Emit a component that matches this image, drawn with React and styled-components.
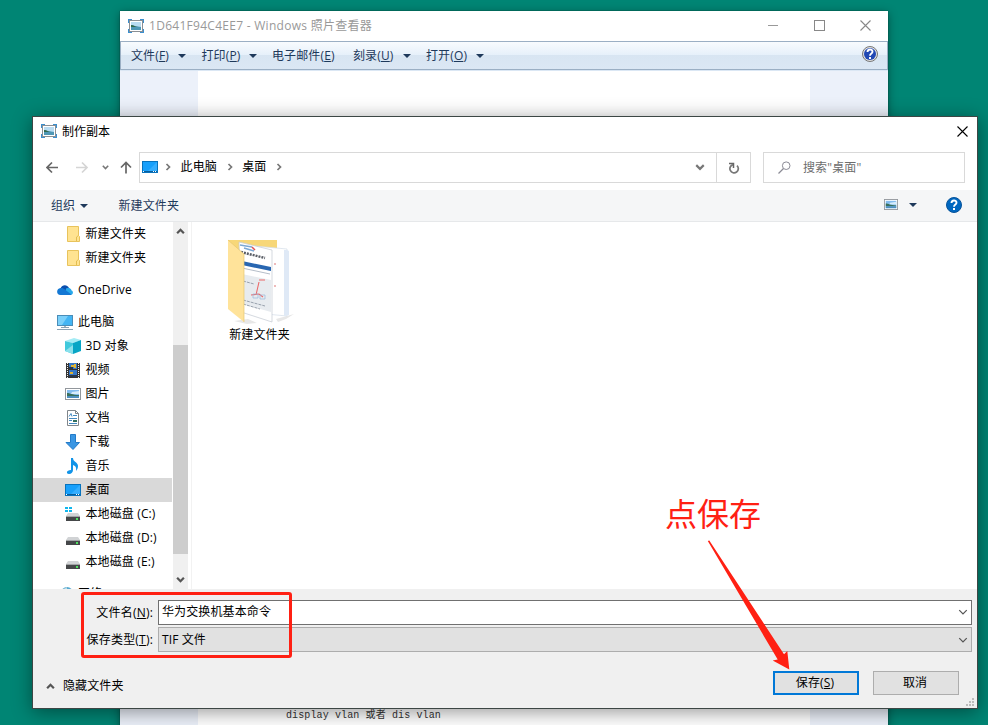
import React from 'react'
import styled, { createGlobalStyle } from 'styled-components'

const GlobalStyle = createGlobalStyle`
* {
  box-sizing: border-box;
}
body {
  margin: 0;
  overflow: hidden;
  font-family: "Open Sans", "Noto Sans CJK SC", sans-serif;
  font-size: 12px;
  line-height: 16px;
  letter-spacing: 0.12px;
  color: #000;
}
svg {
  display: block;
  flex: none;
}
`

const Desktop = styled.div`
position: relative;
width: 988px;
height: 725px;
overflow: hidden;
background: #008574;
`

const Viewer = styled.section`
position: absolute;
left: 120px;
top: 11px;
width: 768px;
height: 730px;
display: flex;
flex-direction: column;
background: white;
box-shadow: 0 0 1px rgba(0,0,0,0.6), 0 2px 9px rgba(0,0,0,0.4);
`

const ViewerTitle = styled.header`
display: flex;
align-items: center;
height: 30px;
padding: 0 17px 1px 8px;
color: #999;
`

const TitleText = styled.span`
flex: 1;
margin-left: 5px;
letter-spacing: ${props => props.$spacing || 0}px;
white-space: nowrap;
`

const WindowControls = styled.div`
display: flex;
gap: 35px;
`

const MenuBar = styled.nav`
display: flex;
align-items: center;
height: 29px;
padding: 0 9px 0 10px;
border: 1px solid #9bafc4;
color: #1e395b;
background: linear-gradient(#f8fbfe 0, #e6f0fa 13px, #d8e5f2 13px, #dbe7f4 100%);

> svg {
  margin-bottom: 3px;
}
`

const MenuItem = styled.div`
display: flex;
align-items: center;
width: ${props => props.$width}px;
white-space: nowrap;
`

const MenuLabel = styled.span`
width: ${props => props.$width || 47}px;
`

const Spacer = styled.div`
flex: 1;
`

const Caret = styled.i`
width: 0;
height: 0;
border: 4px solid transparent;
border-top-color: #1e395b;
border-bottom: 0;
`

const Canvas = styled.div`
flex: 1;
display: flex;
justify-content: center;
border-top: 1px solid #dbe7f4;
background: #ecf1fa;
`

const Page = styled.div`
display: flex;
align-items: flex-end;
width: 612px;
padding: 0 0 17px 88px;
background: white;
color: #333;
font-family: "Liberation Mono", "Noto Sans CJK SC", monospace;
font-size: 10px;
white-space: pre;
`

const Dialog = styled.section`
position: absolute;
left: 32px;
top: 116px;
width: 946px;
height: 593px;
display: flex;
flex-direction: column;
border: 1px solid #3c4644;
background: white;
box-shadow: 0 3px 18px rgba(0,0,0,0.42);
`

const DialogTitle = styled.header`
display: flex;
align-items: center;
height: 28px;
padding: 1px 9px 0 8px;

> svg {
  margin-bottom: 1px;
}
`

const NavRow = styled.div`
display: flex;
align-items: center;
height: 45px;
padding: 0 12px 0 13px;
`

const NavButtons = styled.div`
display: flex;
align-items: center;
width: 93px;
`

const NavSvg = styled.svg`
margin: 0 ${props => props.$right}px 0 ${props => props.$left}px;
`

const AddressBar = styled.div`
display: flex;
width: 612px;
height: 31px;
border: 1px solid #d9d9d9;
`

const Crumbs = styled.div`
flex: 1;
display: flex;
align-items: center;
gap: 8.6px;
padding: 0 11px 1px 2px;

> svg:first-child {
  margin-right: -2.6px;
}
`

const Refresh = styled.div`
display: flex;
align-items: center;
justify-content: center;
width: 34px;
border-left: 1px solid #d9d9d9;
`

const SearchBox = styled.div`
display: flex;
align-items: center;
width: 202px;
height: 31px;
margin-left: 12px;
padding-left: 14px;
gap: 12px;
border: 1px solid #d9d9d9;
color: #6d6d6d;
`

const Toolbar = styled.div`
display: flex;
align-items: center;
height: 32px;
padding: 0 15px 0 18px;
border-bottom: 1px solid #e6e8ea;
background: #f5f6f7;
color: #1e395b;
`

const Organize = styled.div`
display: flex;
align-items: center;
gap: 5px;
width: 67.500px;
`

const ToolbarRight = styled.div`
display: flex;
align-items: center;
margin: 0 0 2px auto;

svg + i {
  margin: 0 29px 0 11px;
}
`

const Body = styled.div`
display: flex;
height: 367px;
`

const Tree = styled.ul`
width: 139px;
margin: 0;
padding: 0;
overflow: hidden;
list-style: none;
`

const TreeItem = styled.li`
display: flex;
align-items: center;
gap: ${props => props.$root ? 5 : 4.5}px;
height: 24px;
margin-top: ${props => props.$gap || 0}px;
padding-left: ${props => props.$root ? 24 : 32}px;
background: ${props => props.$selected ? '#d9d9d9' : 'transparent'};
white-space: nowrap;
`

const Scrollbar = styled.div`
display: flex;
flex-direction: column;
align-items: center;
justify-content: space-between;
width: 15px;
margin-left: 1px;
padding: 5px 0;
background: #f0f0f0;
`

const Thumb = styled.div`
flex: none;
width: 15px;
height: 209px;
margin-top: 87px;
background: #cdcdcd;
`

const Files = styled.div`
flex: 1;
margin-left: 3px;
padding: 17px 0 0 29px;
border-left: 1px solid #f2f2f2;
`

const FileTile = styled.div`
display: flex;
flex-direction: column;
align-items: center;
width: 77px;
gap: 2px;
white-space: nowrap;

svg {
  margin-right: 2px;
}
`

const Footer = styled.footer`
flex: 1;
display: flex;
flex-direction: column;
padding: 11px 5px 0 12px;
background: #f0f0f0;
`

const FieldRow = styled.label`
display: flex;
align-items: center;
height: 25px;
margin-bottom: 2px;
`

const FieldLabel = styled.span`
width: 113px;
padding: 1px 5px 0 0;
text-align: right;
letter-spacing: 0.2px;
white-space: nowrap;
`

const Field = styled.div`
flex: 1;
display: flex;
align-items: center;
justify-content: space-between;
height: 25px;
padding: 0 3px ${props => props.$readonly ? 0 : 1}px;
border: 1px solid ${props => props.$readonly ? '#adadad' : '#707070'};
background: ${props => props.$readonly ? '#e1e1e1' : 'white'};
`

const Actions = styled.div`
display: flex;
align-items: center;
height: 24px;
margin-top: 17px;
padding-right: 13px;
`

const HideFolders = styled.div`
display: flex;
align-items: center;
gap: 8px;
margin: 6px auto 0 1px;
`

const Button = styled.button`
width: 86px;
height: 24px;
margin-left: 14px;
padding: 0 2px 0 0;
border: ${props => props.$primary ? '2px solid #0078d7' : '1px solid #adadad'};
background: #e1e1e1;
color: #000;
font: inherit;
letter-spacing: inherit;
`

const Grip = styled.svg`
align-self: flex-end;
margin-top: 3px;
margin-right: -2px;
`

const Highlight = styled.div`
position: absolute;
left: 81px;
top: 592px;
width: 211px;
height: 66px;
border: 3px solid #ff2013;
border-radius: 3px;
`

const Note = styled.div`
position: absolute;
left: 665px;
top: 488px;
color: #ff2013;
font-size: 32px;
line-height: 48px;
font-family: "Noto Sans CJK SC", sans-serif;
letter-spacing: 0;
`

const NoteArrow = styled.svg`
position: absolute;
left: 700px;
top: 535px;
`

function PhotoIcon() {
  return (
    <svg width="16" height="14" viewBox="0 0 16 14">
      <path d="M0 0h4v3H3v1H0zM12 0h4v4h-3V3h-1zM0 10h3v1h1v3H0zM13 10h3v4h-4v-3h1z" fill="#3b8fce" />
      <rect x="1.5" y="1.5" width="13" height="11" fill="#fff" stroke="#8a8f94" />
      <rect x="3" y="3" width="10" height="8" fill="#b9dcf2" />
      <path d="M3 6l4 1 6 1v3H3z" fill="#4f97b5" />
      <path d="M3 6c3 0 4 2 7 2H3z" fill="#32694d" />
    </svg>
  )
}

function PictureIcon({ width = 16, height = 12 }) {
  return (
    <svg width={width} height={height} viewBox="0 0 16 12" preserveAspectRatio="none">
      <rect x=".5" y=".5" width="15" height="11" fill="#fff" stroke="#92979c" />
      <rect x="2" y="2" width="12" height="8" fill="#83bdf0" />
      <path d="M7 4l7-1v3H6z" fill="#d6ecfb" />
      <path d="M2 5c3 0 5 2 12 2v1H2z" fill="#39705c" />
      <path d="M2 8h12v2H2z" fill="#4c8fbf" />
    </svg>
  )
}

function DesktopIcon() {
  return (
    <svg width="16" height="12" viewBox="0 0 16 12">
      <rect x=".5" y=".5" width="15" height="11" fill="#18a0fb" stroke="#0873bd" />
      <path d="M15 1v9H6z" fill="#35aeff" />
      <path d="M1 10.5h14" stroke="#075d9c" />
      <path d="M1 10.5h1M11 10.5h1M13 10.5h1" stroke="#fff" />
    </svg>
  )
}

function FolderIcon() {
  return (
    <svg width="16" height="16" viewBox="0 0 16 16">
      <path d="M2.500.5h11v9l1 1v5h-12z" fill="#ffe391" stroke="#e8c35c" />
      <path d="M11.500 15v-4l2-1.500" fill="none" stroke="#e3bd50" />
    </svg>
  )
}

function CloudIcon() {
  return (
    <svg width="16" height="12" viewBox="0 0 16 12">
      <path d="M3.500 4.500C5 .5 10 0 12 4l2 3-9 1z" fill="#0a4fae" />
      <path d="M9 4.500c4-1.500 5.500 1 5.500 2 2.500 1 1.500 4.500-1 4.500H8z" fill="#28a8ea" />
      <path d="M3.500 4C7 3.500 8 6 14.500 10.500 14 11 13 11 12 11H3.500C-1 11-1 4.500 3.500 4z" fill="#1478d4" />
    </svg>
  )
}

function ComputerIcon() {
  return (
    <svg width="16" height="16" viewBox="0 0 16 16">
      <rect x=".5" y="1.500" width="15" height="10" fill="#43b5f4" stroke="#4a8db8" />
      <path d="M1 2h10L5 11H1z" fill="#7bd0fa" />
      <path d="M7 12h2v1.500H7z" fill="#a3b5c0" />
      <path d="M4 13.500h8M0 15.500h16" stroke="#8aa2b4" />
    </svg>
  )
}

function CubeIcon() {
  return (
    <svg width="16" height="16" viewBox="0 0 16 16">
      <path d="M0 3l9-3 7 2-8 3z" fill="#a5ecf5" />
      <path d="M0 3l8 2v11l-8-3z" fill="#40c9dc" />
      <path d="M16 2v11l-8 3V5z" fill="#08a5c5" />
      <path d="M0 13l8-6v9z" fill="#8ce1ec" />
    </svg>
  )
}

function FilmIcon() {
  return (
    <svg width="16" height="16" viewBox="0 0 16 16">
      <path d="M1 1h14v15H1z" fill="#343434" />
      <path d="M2.500 1v15M13.500 1v15" stroke="#f1f1f1" strokeDasharray="1 1" />
      <path d="M4 1h8v6H4zM4 8h8v7H4z" fill="#3577c6" />
      <path d="M6 3h3v2H6zM9 2h2v4H9zM5 10h3v2H5z" fill="#e0b435" />
      <path d="M4 5h4v2H4zM4 13h8v2H4z" fill="#26364c" />
    </svg>
  )
}

function DocumentIcon() {
  return (
    <svg width="16" height="16" viewBox="0 0 16 16">
      <path d="M2.500.5h8l3 3v12h-11z" fill="#fff" stroke="#80868b" />
      <path d="M10.500.5v3h3" fill="none" stroke="#80868b" />
      <path d="M4 6.500l2-3 1 3M8 5.500h4M4 8.500h8M4 10.500h3M9 10.500h3M4 13.500h8" fill="none" stroke="#4389c0" />
      <path d="M8 10h4v2H8z" fill="#32705d" />
    </svg>
  )
}

function DownloadIcon() {
  return (
    <svg width="16" height="16" viewBox="0 0 16 16">
      <path d="M5.500.5h5v8h4L8 15.500 1 8.500h4.500z" fill="#3996e3" stroke="#237bc8" />
    </svg>
  )
}

function MusicIcon() {
  return (
    <svg width="16" height="16" viewBox="0 0 16 16">
      <path d="M6 0h2c0 4 5 4 5 8 0 2-1 4-2 5 .5-3 0-5-3-6v5c0 2-1.500 4-4 4-3 0-3-4 2-4z" fill="#1194e8" />
    </svg>
  )
}

function DriveIcon({ system }) {
  return (
    <svg width="16" height="16" viewBox="0 0 16 16">
      <path d="M3 7h10l2 3H1z" fill="#d1d3d5" />
      <path d="M1 10h14v5H1z" fill="#454749" />
      <path d="M1 10.500h14" stroke="#a1a4a6" />
      <path d="M11 12h2v2h-2z" fill="#4ee15f" />
      {system && <path d="M0 1h3v2H0zM4 1h3v2H4zM0 4h3v2H0zM4 4h3v2H4z" fill="#10b6ed" />}
    </svg>
  )
}

function NetworkIcon() {
  return (
    <svg width="16" height="16" viewBox="0 0 16 16">
      <circle cx="10" cy="7" r="6" fill="#57a9d0" />
      <path d="M5 4l5-3v4l-2 3z" fill="#b7d9e4" />
    </svg>
  )
}

function HelpIcon({ glossy }) {
  return (
    <svg width="16" height="16" viewBox="0 0 16 16">
      <circle cx="8" cy="8" r="7.500" fill={glossy ? '#e2e2e2' : '#0067c0'} stroke={glossy ? '#777' : '#07539a'} />
      {glossy && <circle cx="8" cy="8" r="6" fill="#2148b4" />}
      <path d="M5.500 6c0-3.300 5-3.200 5-.3C10.500 7.500 8 7.500 8 9.700" fill="none" stroke="#fff" strokeWidth="1.900" />
      <path d="M7 11h2v2H7z" fill="#fff" />
    </svg>
  )
}

function Chevron({ dir = 'down', color = '#555', size = 8, weight = 2 }) {
  const turn = { down: 0, up: 180, right: -90 }[dir]
  return (
    <svg width={size} height={size} viewBox="0 0 8 8">
      <path d="M1 2.500l3 3 3-3" fill="none" stroke={color} strokeWidth={weight} transform={`rotate(${turn} 4 4)`} />
    </svg>
  )
}

function CloseIcon({ color }) {
  return (
    <svg width="11" height="11" viewBox="0 0 11 11">
      <path d="M.5.5l10 10M10.500.5l-10 10" stroke={color} strokeWidth="1.100" />
    </svg>
  )
}

// big folder with a few sheets sticking out
function FolderTile() {
  return (
    <svg width="70" height="86" viewBox="0 0 70 86">
      <path d="M10 82l14-2 9 4-10 1zM52 80l18-5-8 5-8 3z" fill="#e7e7e7" />
      <path d="M4 1h49v66H4z" fill="#f7d778" />
      <path d="M31 7l32 3v67l-32-3z" fill="#fff" stroke="#d3dce8" strokeWidth=".7" />
      <path d="M63 11l2 1v64l-5 1V11z" fill="#dfe9f6" />
      <path d="M15 3l33 8v72l-31-10z" fill="#fff" stroke="#c3c9d1" strokeWidth=".7" />
      <path d="M16 6l12 2M20 9l10 3" stroke="#7ba8d4" strokeWidth="1.500" />
      <path d="M28 8l3 3" stroke="#e24f4f" strokeWidth="1.500" />
      <path d="M17 13l24 6" stroke="#5b5f67" strokeWidth="2.500" strokeDasharray="2 1" />
      <path d="M18 22l29 6v4l-29-6z" fill="#2866b1" />
      <path d="M18 29l28 6" stroke="#b5bec9" />
      <path d="M18 35l29 6v32l-29-8z" fill="#e7ebef" />
      <path d="M19 42l11 3M19 61l22 6M19 65l17 5" stroke="#98a1ad" strokeWidth="1" strokeDasharray="3 1" />
      <path d="M35 43l-3 13M35 41h6M27 56l8-1 4 3" fill="none" stroke="#ec6868" strokeWidth="1.100" />
      <path d="M29 55h5v4h-5zM36 56h5v4h-5z" fill="none" stroke="#9ab8dc" strokeWidth=".7" />
      <path d="M50 25h3M50 47h3" stroke="#d77" strokeDasharray="2 1" />
      <path d="M4 1l16 14v68L4 70z" fill="#ffe39a" />
      <path d="M4 1l16 14v68" fill="none" stroke="#e6c770" strokeWidth=".7" />
    </svg>
  )
}

const menus = [
  { text: '文件', hotkey: 'F', width: 70.500, caret: true },
  { text: '打印', hotkey: 'P', width: 70.500, caret: true },
  { text: '电子邮件', hotkey: 'E', width: 81 },
  { text: '刻录', hotkey: 'U', width: 73, label: 50, caret: true },
  { text: '打开', hotkey: 'O', width: 60, label: 50, caret: true },
]

const places = [
  { text: '新建文件夹', icon: <FolderIcon /> },
  { text: '新建文件夹', icon: <FolderIcon /> },
  { text: 'OneDrive', icon: <CloudIcon />, root: true, gap: 8 },
  { text: '此电脑', icon: <ComputerIcon />, root: true, gap: 8 },
  { text: '3D 对象', icon: <CubeIcon /> },
  { text: '视频', icon: <FilmIcon /> },
  { text: '图片', icon: <PictureIcon /> },
  { text: '文档', icon: <DocumentIcon /> },
  { text: '下载', icon: <DownloadIcon /> },
  { text: '音乐', icon: <MusicIcon /> },
  { text: '桌面', icon: <DesktopIcon />, selected: true },
  { text: '本地磁盘 (C:)', icon: <DriveIcon system /> },
  { text: '本地磁盘 (D:)', icon: <DriveIcon /> },
  { text: '本地磁盘 (E:)', icon: <DriveIcon /> },
  { text: '网络', icon: <NetworkIcon />, root: true, gap: 8 },
]

function PhotoViewer() {
  return (
    <Viewer>
      <ViewerTitle>
        <PhotoIcon />
        <TitleText $spacing={0.28}>1D641F94C4EE7 - Windows 照片查看器</TitleText>
        <WindowControls>
          <svg width="11" height="11"><path d="M0 5.500h10" stroke="#999" /></svg>
          <svg width="11" height="11"><rect x=".5" y=".5" width="10" height="10" fill="none" stroke="#888" /></svg>
          <CloseIcon color="#888" />
        </WindowControls>
      </ViewerTitle>
      <MenuBar>
        {menus.map(m => (
          <MenuItem key={m.text} $width={m.width}>
            <MenuLabel $width={m.label}>{m.text}(<u>{m.hotkey}</u>)</MenuLabel>
            {m.caret && <Caret />}
          </MenuItem>
        ))}
        <Spacer />
        <HelpIcon glossy />
      </MenuBar>
      <Canvas>
        <Page>display vlan 或者 dis vlan</Page>
      </Canvas>
    </Viewer>
  )
}

function SaveDialog() {
  return (
    <Dialog>
      <DialogTitle>
        <PhotoIcon />
        <TitleText>制作副本</TitleText>
        <CloseIcon color="#000" />
      </DialogTitle>
      <NavRow>
        <NavButtons>
          <NavSvg width="13" height="13" $left={0} $right={17}>
            <path d="M12 6.500H1M6 1.500l-5 5 5 5" fill="none" stroke="#666" strokeWidth="1.700" />
          </NavSvg>
          <NavSvg width="13" height="13" $left={0} $right={13}>
            <path d="M0 6.500h11M6 1.500l5 5-5 5" fill="none" stroke="#d5d5d5" strokeWidth="1.700" />
          </NavSvg>
          <NavSvg width="7" height="7" $left={0} $right={10}>
            <path d="M.8 1.800l2.700 2.700 2.700-2.700" fill="none" stroke="#777" strokeWidth="1.600" />
          </NavSvg>
          <NavSvg width="13" height="13" $left={0} $right={0}>
            <path d="M7 12.500v-11M2 6.500l5-5 5 5" fill="none" stroke="#666" strokeWidth="1.700" />
          </NavSvg>
        </NavButtons>
        <AddressBar>
          <Crumbs>
            <DesktopIcon />
            <Chevron dir="right" color="#777" weight={1.7} />
            <span>此电脑</span>
            <Chevron dir="right" color="#777" weight={1.7} />
            <span>桌面</span>
            <Chevron dir="right" color="#777" weight={1.7} />
            <Spacer />
            <Chevron color="#777" size={10} weight={1.7} />
          </Crumbs>
          <Refresh>
            <svg width="12" height="12" viewBox="0 0 12 12">
              <path d="M1 1.500h4.500V6" fill="none" stroke="#666" strokeWidth="1.500" />
              <path d="M5 2.600A4.200 4.200 0 1 0 9 3.600" fill="none" stroke="#777" strokeWidth="1.700" />
            </svg>
          </Refresh>
        </AddressBar>
        <SearchBox>
          <svg width="13" height="13" viewBox="0 0 13 13">
            <circle cx="8.200" cy="4.700" r="3.800" fill="none" stroke="#8b8b96" />
            <path d="M5.500 7.500l-5 5" stroke="#8b8b96" strokeWidth="1.200" />
          </svg>
          搜索"桌面"
        </SearchBox>
      </NavRow>
      <Toolbar>
        <Organize>组织<Caret /></Organize>
        新建文件夹
        <ToolbarRight>
          <PictureIcon width={14} height={11} />
          <Caret />
          <HelpIcon />
        </ToolbarRight>
      </Toolbar>
      <Body>
        <Tree>
          {places.map((p, i) => (
            <TreeItem key={i} $root={p.root} $gap={p.gap} $selected={p.selected}>
              {p.icon}
              {p.text}
            </TreeItem>
          ))}
        </Tree>
        <Scrollbar>
          <Chevron dir="up" size={9} />
          <Thumb />
          <Chevron size={9} />
        </Scrollbar>
        <Files>
          <FileTile>
            <FolderTile />
            新建文件夹
          </FileTile>
        </Files>
      </Body>
      <Footer>
        <FieldRow>
          <FieldLabel>文件名(<u>N</u>):</FieldLabel>
          <Field>华为交换机基本命令<Chevron size={10} weight={1} /></Field>
        </FieldRow>
        <FieldRow>
          <FieldLabel>保存类型(<u>T</u>):</FieldLabel>
          <Field $readonly>TIF 文件<Chevron size={10} weight={1} /></Field>
        </FieldRow>
        <Actions>
          <HideFolders>
            <Chevron dir="up" size={9} />
            隐藏文件夹
          </HideFolders>
          <Button $primary>保存(<u>S</u>)</Button>
          <Button>取消</Button>
        </Actions>
        <Grip width="8" height="8">
          <path d="M6 0h2v2H6zM3 3h2v2H3zM6 3h2v2H6zM0 6h2v2H0zM3 6h2v2H3zM6 6h2v2H6z" fill="#bcbcbc" />
        </Grip>
      </Footer>
    </Dialog>
  )
}

function App() {
  return (
    <Desktop>
      <GlobalStyle />
      <PhotoViewer />
      <SaveDialog />
      <Highlight />
      <Note>点保存</Note>
      <NoteArrow width="100" height="140">
        <path d="M7.800 6l1.500-.5L84 119.300l3.300-3.300 2 18.500L72.700 125.500l5-1z" fill="#ff2013" />
      </NoteArrow>
    </Desktop>
  )
}
export default App
